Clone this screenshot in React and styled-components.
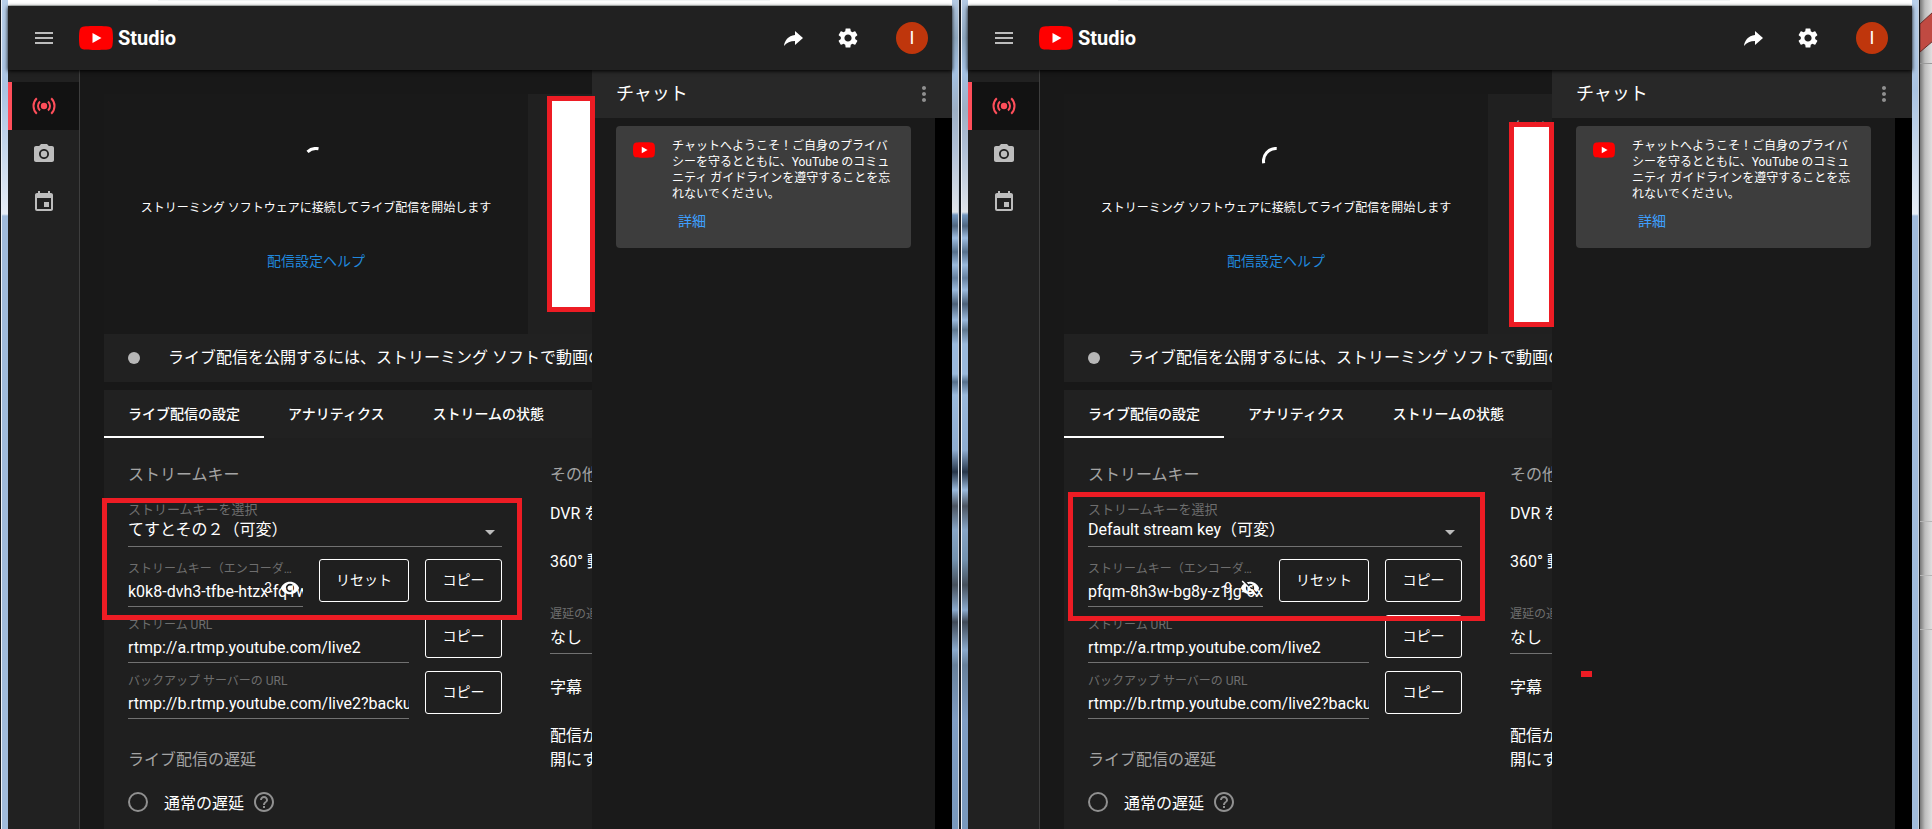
import React, { useId, useState } from 'react';
import styled, { createGlobalStyle } from 'styled-components';
import {
  MdMenu,
  MdSettings,
  MdCameraAlt,
  MdEvent,
  MdMoreVert,
  MdVisibility,
  MdVisibilityOff,
  MdHelpOutline,
  MdArrowDropDown,
} from 'react-icons/md';

const GlobalStyle = createGlobalStyle`
  * {
    box-sizing: border-box;
  }

  body {
    margin: 0;
    overflow: hidden;
    background: #181818;
    color: #fff;
    font-family: Roboto, 'Noto Sans CJK JP', sans-serif;
    font-size: 16px;
  }

  button,
  input,
  select {
    margin: 0;
    padding: 0;
    border: 0;
    border-radius: 0;
    outline: 0;
    background: none;
    color: inherit;
    font: inherit;
  }

  button {
    cursor: pointer;
  }
`;

const Desktop = styled.div`
  display: flex;
  height: 100vh;
`;

const Window = styled.section`
  position: relative;
  display: flex;
  flex: 1;
  min-width: 0;
`;

const blueGlass = 'linear-gradient(#b9d0ea 0, #a9c3e2 90px, #e6edf6 214px, #9fbadb 216px, #a0bbdb 100%)';
const blurredGlass =
  'linear-gradient(#b4cae4 0, #8fa8c0 38px, #a4c2e4 70px, #9dafc4 110px, #b0c0d6 150px, #dfe4ea 212px, #7397bf 215px, #4f6680 226px, #9dbce0 238px, #56708c 252px, #9ab9dc 265px, #66809e 278px, #9ab9dc 290px, #4c6179 304px, #9ab9dc 320px, #5f7890 330px, #9ab9dc 344px, #9ab9dc 374px, #56708c 382px, #9ab9dc 395px, #8eacd0 450px, #27364a 472px, #9ab9dc 490px, #4c5562 506px, #87a5c6 530px, #7391ad 560px, #46505c 585px, #8aa9cc 610px, #404a58 622px, #8aa9cc 650px, #67809a 665px, #7f9dc4 720px, #7898bc 100%)';

const LeftEdge = styled.div`
  flex: 0 0 8px;
  border-left: 1px solid #14181e;
  background: ${({ $glass }) => $glass};
  box-shadow: inset 1px 0 #eef2f8;
`;

const RightEdge = styled.div`
  flex: 0 0 8px;
  border-right: 1px solid #14181e;
  background: ${({ $glass }) => $glass};
  box-shadow: inset -1px 0 #c9d2dc;
`;

const Screen = styled.div`
  display: flex;
  flex: 1;
  flex-direction: column;
  min-width: 0;
  background: #181818;
`;

const BrowserBar = styled.div`
  flex: 0 0 6px;
  padding: 0 182px 0 150px;
  border-bottom: 1px solid #d3d9d6;
  background: #fff;
`;

const AddressBar = styled.div`
  height: 1px;
  background: #f1f3f4;
`;

const Header = styled.header`
  z-index: 1;
  display: flex;
  flex: 0 0 64px;
  align-items: center;
  padding: 0 24px 0 16px;
  background: #212121;
  box-shadow: 0 1px 4px #000;
`;

const IconButton = styled.button`
  display: flex;
  align-items: center;
  justify-content: center;
  width: 40px;
  height: 40px;
  color: ${({ $color }) => $color || '#fff'};
`;

const Logo = styled.a`
  display: flex;
  align-items: center;
  gap: 5px;
  margin-left: 15px;
  color: #fff;
  font-size: 20px;
  font-weight: 700;
  text-decoration: none;
`;

const HeaderActions = styled.div`
  display: flex;
  align-items: center;
  gap: 14px;
  margin-left: auto;
`;

const Avatar = styled.button`
  width: 32px;
  height: 32px;
  margin-left: 14px;
  border-radius: 50%;
  background: #bf360c;
  font-size: 18px;
  line-height: 32px;
`;

const Body = styled.div`
  display: flex;
  flex: 1;
  min-height: 0;
`;

const Sidebar = styled.nav`
  flex: 0 0 72px;
  padding-top: 12px;
  border-right: 1px solid #3e3e3e;
  background: #212121;
`;

const SidebarLink = styled.a`
  display: flex;
  align-items: center;
  justify-content: center;
  height: 48px;
  padding-right: 4px;
  border-left: 4px solid ${({ $active }) => ($active ? '#ff4e5a' : 'transparent')};
  background: ${({ $active }) => ($active ? '#121212' : 'none')};
  color: ${({ $active }) => ($active ? '#ff4e5a' : '#bdbdbd')};
`;

const Main = styled.main`
  flex: 1;
  min-width: 0;
  padding: 24px 0 0 24px;
  overflow: hidden;
  white-space: nowrap;
`;

const PreviewRow = styled.div`
  display: flex;
  height: 240px;
`;

const Preview = styled.div`
  display: flex;
  flex: 0 0 424px;
  flex-direction: column;
  align-items: center;
  padding-top: 53px;
  background: #191919;
`;

const PreviewText = styled.p`
  margin: 24px 0 34px;
  font-size: 12px;
  line-height: 18px;
`;

const HelpLink = styled.a`
  color: #2188dd;
  font-size: 14px;
  line-height: 20px;
  text-decoration: none;
`;

const Metadata = styled.div`
  flex: 1;
  padding: 24px;
  background: #202020;
  color: #aaa;
  font-size: 13px;
  line-height: 18px;
`;

const StatusBar = styled.div`
  display: flex;
  align-items: center;
  gap: 28px;
  height: 48px;
  padding-left: 24px;
  background: #212121;
  line-height: 24px;
`;

const StatusDot = styled.span`
  flex: 0 0 12px;
  height: 12px;
  border-radius: 50%;
  background: #b7b7b7;
`;

const Tabs = styled.div`
  display: flex;
  height: 48px;
  margin-top: 8px;
  background: #212121;
`;

const Tab = styled.button`
  padding: 0 24px;
  border-bottom: 2px solid ${({ $active }) => ($active ? '#fff' : 'transparent')};
  font-size: 14px;
  font-weight: 500;
`;

const Settings = styled.div`
  display: flex;
  gap: 48px;
  height: 100%;
  padding: 24px 0 0 24px;
  background: #1f1f1f;
`;

const KeyColumn = styled.div`
  flex: 0 0 374px;
  min-width: 0;
`;

const OtherColumn = styled.div`
  flex: 0 0 320px;
`;

const OptionList = styled.div`
  display: flex;
  flex-direction: column;
  gap: 20px;
  padding-top: 12px;
`;

const Heading = styled.h2`
  margin: 0;
  color: #a4a4a4;
  font-size: 16px;
  font-weight: 400;
  line-height: 26px;
`;

const Label = styled.label`
  display: block;
  padding: 2px 8px 0 0;
  overflow: hidden;
  color: #6e6e6e;
  font-size: ${({ $large }) => ($large ? '13px' : '12px')};
  line-height: 16px;
  text-overflow: ellipsis;
`;

const SelectField = styled.div`
  margin: 12px 0;
`;

const LatencyField = styled.div`
  padding-top: 8px;
`;

const SelectBox = styled.div`
  display: grid;
  align-items: center;
  border-bottom: 1px solid #717171;

  > * {
    grid-area: 1 / 1;
  }

  > svg {
    justify-self: end;
    color: #bdbdbd;
    pointer-events: none;
  }
`;

const Select = styled.select`
  width: 100%;
  height: 28px;
  padding-bottom: 6px;
  appearance: none;
`;

const LatencySelect = styled(Select)`
  height: 31px;
  padding: 0;
`;

const FieldRow = styled.div`
  display: flex;
  align-items: flex-start;
  gap: 16px;
  margin-bottom: 8px;
`;

const Field = styled.div`
  position: relative;
  flex: 1;
  min-width: 0;
`;

const TextInput = styled.input`
  display: block;
  width: 100%;
  height: 30px;
  border-bottom: 1px solid #717171;
`;

const KeyVisibility = styled.div`
  position: absolute;
  top: 18px;
  right: 3px;
  display: flex;
  align-items: center;
  gap: 8px;
  height: 22px;
  font-size: 14px;
`;

const RevealButton = styled.button`
  display: flex;
`;

const OutlineButton = styled.button`
  min-width: 77px;
  height: 43px;
  padding: 0 16px 4px;
  border: 1px solid #fff;
  border-radius: 3px;
  font-size: 14px;
`;

const LatencyHeading = styled(Heading)`
  margin: 28px 0 16px;
`;

const RadioRow = styled.div`
  display: flex;
  align-items: center;
  height: 26px;
  color: #909090;
`;

const Radio = styled.input`
  width: 20px;
  height: 20px;
  margin-right: 16px;
  border: 2px solid #909090;
  border-radius: 50%;
  appearance: none;
`;

const RadioLabel = styled.label`
  margin-right: 8px;
  color: #fff;
`;

const Option = styled.div`
  line-height: 28px;
`;

const UnlistOption = styled.div`
  padding-top: 2px;
  line-height: 24px;
`;

const ChatPanel = styled.aside`
  display: flex;
  flex: 0 0 360px;
  flex-direction: column;
  background: #1a1a1a;
`;

const ChatHeader = styled.div`
  display: flex;
  flex: 0 0 48px;
  align-items: center;
  justify-content: space-between;
  padding: 0 8px 0 24px;
  background: #282828;
`;

const ChatTitle = styled.h2`
  margin: 0;
  font-size: 18px;
  font-weight: 400;
  line-height: 24px;
`;

const ChatBody = styled.div`
  flex: 1;
  padding: 8px 24px;
  border-right: 17px solid #000;
`;

const WelcomeCard = styled.div`
  display: flex;
  gap: 17px;
  padding: 12px 16px 8px 17px;
  border-radius: 4px;
  background: #3d3d3d;
  font-size: 12px;
  line-height: 16px;

  > svg {
    flex: none;
    margin-top: 4px;
  }
`;

const WelcomeText = styled.p`
  max-width: 224px;
  margin: 0;
`;

const DetailsLink = styled.a`
  display: inline-block;
  margin: 6px;
  color: #3ea0ff;
  font-size: 14px;
  line-height: 26px;
  text-decoration: none;
`;

// Red marker frames drawn over the windows
const Marker = styled.div`
  position: absolute;
  z-index: 2;
  top: ${({ $box }) => $box[1]}px;
  left: ${({ $box }) => $box[0]}px;
  width: ${({ $box }) => $box[2]}px;
  height: ${({ $box }) => $box[3]}px;
  border: ${({ $solid }) => ($solid ? 0 : 5)}px solid #ed1c24;
  background: ${({ $fill }) => $fill || 'none'};
  pointer-events: none;
`;

const BackgroundStrip = styled.div`
  flex: 0 0 12px;
  background: linear-gradient(90deg, #777, #bdbdbd 5px, #e0e0e0);
`;

const YouTubeIcon = ({ width, height }) => (
  <svg width={width} height={height} viewBox="0 0 34 24" aria-hidden="true">
    <path
      fill="#f00"
      d="M33.3 3.7A4.3 4.3 0 0 0 30.3.7C27.600 0 17 0 17 0S6.400 0 3.700.700A4.300 4.300 0 0 0 .700 3.700C0 6.400 0 12 0 12s0 5.600.700 8.300a4.300 4.300 0 0 0 3 3C6.400 24 17 24 17 24s10.600 0 13.300-.700a4.300 4.300 0 0 0 3-3C34 17.600 34 12 34 12s0-5.600-.700-8.300z"
    />
    <path fill="#fff" d="M13.500 7v10l9-5z" />
  </svg>
);

const ShareIcon = () => (
  <svg width="24" height="24" viewBox="1 0 24 24" fill="currentColor" aria-hidden="true">
    <path d="M14 9V5l8 7-8 7v-4.100C9.500 14.900 5.500 16.500 3 20c.500-5 4-10.500 11-11z" />
  </svg>
);

const LiveIcon = () => (
  <svg width="24" height="24" viewBox="0 0 24 24" fill="none" stroke="currentColor" strokeWidth="2" aria-hidden="true">
    <circle cx="12" cy="12" r="3.200" fill="currentColor" stroke="none" />
    <path d="M8 7.400a6.300 6.300 0 0 0 0 9.200M16 7.400a6.300 6.300 0 0 1 0 9.200" />
    <path d="M4.800 4.300a10.600 10.600 0 0 0 0 15.400M19.200 4.300a10.600 10.600 0 0 1 0 15.400" />
  </svg>
);

const Spinner = ({ arc }) => (
  <svg width="28" height="28" viewBox="0 0 28 28" fill="none" stroke="#fff" strokeWidth="3" aria-hidden="true">
    <path d={arc} />
  </svg>
);

const RedRibbon = () => (
  <svg width="12" height="829" viewBox="0 0 12 829" aria-hidden="true">
    <path fill="#c04a42" stroke="#6b2a26" d="M0 24L13 12v29L0 52z" />
    <path stroke="#9a9a9a" d="M0 63.500h12" />
    <path stroke="#b5b5b5" d="M0 521.500h12M0 575.500h12M0 629.500h12" />
  </svg>
);

const UrlField = ({ label, value }) => {
  const id = useId();
  return (
    <FieldRow>
      <Field>
        <Label htmlFor={id}>{label}</Label>
        <TextInput id={id} readOnly value={value} />
      </Field>
      <OutlineButton>コピー</OutlineButton>
    </FieldRow>
  );
};

const StreamSettings = ({ keyName, streamKey, seconds, masked }) => {
  const id = useId();
  const [hidden, setHidden] = useState(masked);
  return (
    <Settings>
      <KeyColumn>
        <Heading>ストリームキー</Heading>
        <SelectField>
          <Label $large htmlFor={`${id}-select`}>ストリームキーを選択</Label>
          <SelectBox>
            <Select id={`${id}-select`}>
              <option>{keyName}</option>
            </Select>
            <MdArrowDropDown size={24} />
          </SelectBox>
        </SelectField>
        <FieldRow>
          <Field>
            <Label htmlFor={`${id}-key`}>ストリームキー（エンコーダに貼り付け）</Label>
            <TextInput id={`${id}-key`} readOnly value={streamKey} />
            <KeyVisibility>
              <span>{seconds}</span>
              <RevealButton aria-label="表示" onClick={() => setHidden(!hidden)}>
                {hidden ? <MdVisibilityOff size={20} /> : <MdVisibility size={20} />}
              </RevealButton>
            </KeyVisibility>
          </Field>
          <OutlineButton>リセット</OutlineButton>
          <OutlineButton>コピー</OutlineButton>
        </FieldRow>
        <UrlField label="ストリーム URL" value="rtmp://a.rtmp.youtube.com/live2" />
        <UrlField label="バックアップ サーバーの URL" value="rtmp://b.rtmp.youtube.com/live2?backup=1" />
        <LatencyHeading>ライブ配信の遅延</LatencyHeading>
        <RadioRow>
          <Radio type="radio" id={`${id}-latency`} />
          <RadioLabel htmlFor={`${id}-latency`}>通常の遅延</RadioLabel>
          <MdHelpOutline size={24} />
        </RadioRow>
      </KeyColumn>
      <OtherColumn>
        <Heading>その他の設定</Heading>
        <OptionList>
          <Option>DVR を有効にする</Option>
          <Option>360° 動画</Option>
          <LatencyField>
            <Label htmlFor={`${id}-delay`}>遅延の追加</Label>
            <SelectBox>
              <LatencySelect id={`${id}-delay`}>
                <option>なし</option>
              </LatencySelect>
            </SelectBox>
          </LatencyField>
          <Option>字幕</Option>
          <UnlistOption>
            配信が終了したら限定公
            <br />
            開にする
          </UnlistOption>
        </OptionList>
      </OtherColumn>
    </Settings>
  );
};

const Chat = () => (
  <ChatPanel>
    <ChatHeader>
      <ChatTitle>チャット</ChatTitle>
      <IconButton $color="#909090" aria-label="その他">
        <MdMoreVert size={24} />
      </IconButton>
    </ChatHeader>
    <ChatBody>
      <WelcomeCard>
        <YouTubeIcon width={22} height={16} />
        <div>
          <WelcomeText>
            チャットへようこそ！ご自身のプライバシーを守るとともに、YouTube のコミュニティ ガイドラインを遵守することを忘れないでください。
          </WelcomeText>
          <DetailsLink href="#">詳細</DetailsLink>
        </div>
      </WelcomeCard>
    </ChatBody>
  </ChatPanel>
);

const StudioWindow = ({ stream, leftGlass, rightGlass, children }) => (
  <Window>
    <LeftEdge $glass={leftGlass} />
    <Screen>
      <BrowserBar>
        <AddressBar />
      </BrowserBar>
      <Header>
        <IconButton $color="#bdbdbd" aria-label="メニュー">
          <MdMenu size={24} />
        </IconButton>
        <Logo href="#">
          <YouTubeIcon width={34} height={24} />
          Studio
        </Logo>
        <HeaderActions>
          <IconButton aria-label="共有">
            <ShareIcon />
          </IconButton>
          <IconButton aria-label="設定">
            <MdSettings size={24} />
          </IconButton>
          <Avatar>I</Avatar>
        </HeaderActions>
      </Header>
      <Body>
        <Sidebar>
          <SidebarLink $active href="#" aria-label="ストリーム">
            <LiveIcon />
          </SidebarLink>
          <SidebarLink href="#" aria-label="ウェブカメラ">
            <MdCameraAlt size={24} />
          </SidebarLink>
          <SidebarLink href="#" aria-label="管理">
            <MdEvent size={24} />
          </SidebarLink>
        </Sidebar>
        <Main>
          <PreviewRow>
            <Preview>
              <Spinner arc={stream.arc} />
              <PreviewText>ストリーミング ソフトウェアに接続してライブ配信を開始します</PreviewText>
              <HelpLink href="#">配信設定ヘルプ</HelpLink>
            </Preview>
            <Metadata>タイトル</Metadata>
          </PreviewRow>
          <StatusBar>
            <StatusDot />
            <span>ライブ配信を公開するには、ストリーミング ソフトで動画の送信を開始してください</span>
          </StatusBar>
          <Tabs role="tablist">
            <Tab $active role="tab">ライブ配信の設定</Tab>
            <Tab role="tab">アナリティクス</Tab>
            <Tab role="tab">ストリームの状態</Tab>
          </Tabs>
          <StreamSettings {...stream} />
        </Main>
        <Chat />
      </Body>
    </Screen>
    <RightEdge $glass={rightGlass} />
    {children}
  </Window>
);

const testStream = {
  keyName: 'てすとその２（可変）',
  streamKey: 'k0k8-dvh3-tfbe-htzx-fq1w',
  seconds: 3,
  masked: false,
  arc: 'M5.500 4.800A12.500 12.500 0 0 1 16.500 1.750',
};

const defaultStream = {
  keyName: 'Default stream key（可変）',
  streamKey: 'pfqm-8h3w-bg8y-z1jg-6x',
  seconds: 9,
  masked: true,
  arc: 'M1.700 16.300A12.500 12.500 0 0 1 14.700 1.500',
};

const App = () => (
  <>
    <GlobalStyle />
    <Desktop>
      <StudioWindow stream={testStream} leftGlass={blueGlass} rightGlass={blurredGlass}>
        <Marker $box={[547, 96, 48, 216]} $fill="#fff" />
        <Marker $box={[102, 498, 420, 122]} />
      </StudioWindow>
      <StudioWindow stream={defaultStream} leftGlass={blurredGlass} rightGlass={blueGlass}>
        <Marker $box={[549, 122, 45, 205]} $fill="#fff" />
        <Marker $box={[108, 492, 417, 129]} />
        <Marker $box={[621, 671, 11, 6]} $solid $fill="#ed1c24" />
      </StudioWindow>
      <BackgroundStrip>
        <RedRibbon />
      </BackgroundStrip>
    </Desktop>
  </>
);

export default App;
